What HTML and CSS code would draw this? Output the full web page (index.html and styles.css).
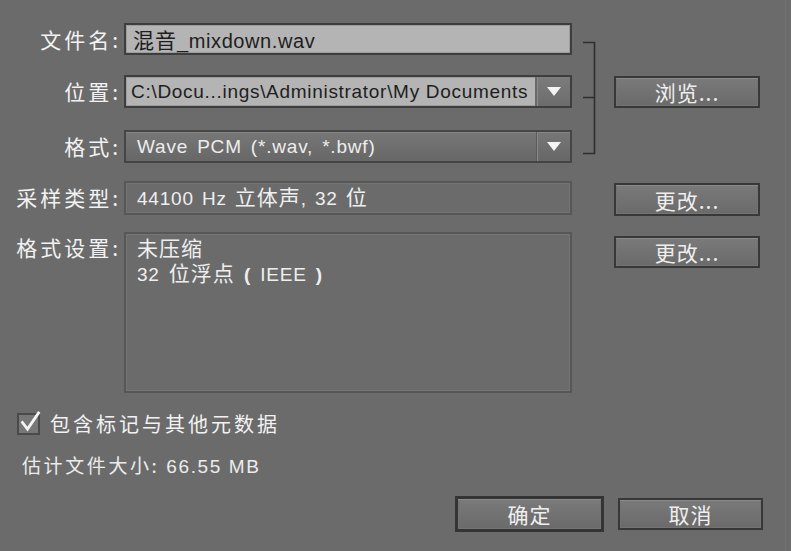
FILE: index.html
```html
<!DOCTYPE html>
<html lang="zh-CN">
<head>
<meta charset="utf-8">
<title>导出</title>
<link rel="stylesheet" href="styles.css">
</head>
<body>
<div class="dialog">
  <div class="form">
    <div class="label row1">文件名:</div>
    <div class="field input name row1"><span class="cj">混音</span>_mixdown.wav</div>
    <svg class="bracket" width="42" height="140" viewBox="0 0 42 140">
      <path d="M11 19.5 H22.5 V130.5 H11 M11 74.5 H22.5" fill="none" stroke="#2e2e2e" stroke-width="1.6"/>
    </svg>

    <div class="label row2">位置:</div>
    <div class="field input combo row2">
      <span class="value path">C:\Docu...ings\Administrator\My Documents</span>
      <span class="drop light"><span class="tri"></span></span>
    </div>
    <button class="btn browse row2">浏览...</button>

    <div class="label row3">格式:</div>
    <div class="field select combo row3">
      <span class="value wide">Wave PCM (*.wav, *.bwf)</span>
      <span class="drop"><span class="tri"></span></span>
    </div>

    <div class="label row4">采样类型:</div>
    <div class="field readout wide rate row4">44100 Hz <span class="cj">立体声</span>, 32 <span class="cj">位</span></div>
    <button class="btn row4">更改...</button>

    <div class="label row5 top">格式设置:</div>
    <div class="field readout box wide row5">
      <div class="line"><span class="cj">未压缩</span></div>
      <div class="line">32 <span class="cj">位浮点</span> <b class="paren">(</b> IEEE <b class="paren">)</b></div>
    </div>
    <button class="btn row5 top2">更改...</button>
  </div>

  <label class="check">
    <span class="cbox">
      <svg width="26" height="26" viewBox="0 0 26 26">
        <path d="M5.5 12.5 L10.5 19 L21.5 3" fill="none" stroke="#f4f4f4" stroke-width="2.8" stroke-linecap="square"/>
      </svg>
    </span>
    <span>包含标记与其他元数据</span>
  </label>

  <div class="estimate">估计文件大小: <span class="num">66.55 MB</span></div>

  <div class="actions">
    <button class="btn primary">确定</button>
    <button class="btn cancel">取消</button>
  </div>
</div>
</body>
</html>
```

FILE: styles.css
```css
html, body {
  margin: 0;
  padding: 0;
  background: #ffffff;
}

.dialog {
  width: 791px;
  height: 551px;
  box-sizing: border-box;
  background: #6b6b6b;
  box-shadow: inset -5px 0 0 #6b6b6b, inset -6px 0 0 #727272;
  padding-top: 23px;
  font-family: "Noto Sans CJK SC", "Liberation Sans", sans-serif;
  color: #f0f0f0;
}

.form {
  display: grid;
  grid-template-columns: 124px 448px 42px 146px;
  grid-template-rows: 32px 20px 33px 22px 33px 18px 34px 17px 161px;
}

.row1 { grid-row: 1; }
.row2 { grid-row: 3; }
.row3 { grid-row: 5; }
.row4 { grid-row: 7; }
.row5 { grid-row: 9; }

.label {
  grid-column: 1;
  font-size: 21px;
  letter-spacing: 3px;
  line-height: 32px;
  text-align: right;
  padding-right: 3px;
  color: #f2f2f2;
  white-space: nowrap;
}

.label.top {
  line-height: 30px;
  align-self: start;
}

.field {
  grid-column: 2;
  box-sizing: border-box;
  font-family: "Liberation Sans", "Noto Sans CJK SC", sans-serif;
  font-size: 19px;
  white-space: nowrap;
}

.cj {
  display: inline-block;
  font-family: "Noto Sans CJK SC", sans-serif;
  font-size: 21px;
  letter-spacing: 1px;
}

.input {
  background: #b4b4b4;
  color: #1e1e1e;
  border: 2px solid #3e3e3e;
  box-shadow: inset 0 0 0 1px #9c9c9c;
  padding: 0 7px;
  line-height: 28px;
}

.input.name {
  font-size: 20px;
  letter-spacing: 0.6px;
}

.combo {
  display: flex;
  align-items: stretch;
  padding: 0;
}

.combo .value {
  flex: 1;
  padding-left: 5px;
  line-height: 29px;
}

.value.path {
  letter-spacing: 0.7px;
}

.wide {
  letter-spacing: 0.8px;
  word-spacing: 3px;
}

.rate {
  word-spacing: 2px;
}

.drop {
  width: 33px;
  display: flex;
  align-items: center;
  justify-content: center;
  border-left: 1px solid #5b5b5b;
  box-shadow: inset 1px 0 0 #8a8a8a;
}

.drop.light {
  background: linear-gradient(#7c7c7c, #6c6c6c);
  border-left: 2px solid #6a6a6a;
}

.tri {
  width: 0;
  height: 0;
  border-left: 7px solid transparent;
  border-right: 7px solid transparent;
  border-top: 9px solid #f4f4f4;
}

.select {
  background: linear-gradient(#777777, #676767);
  color: #ededed;
  border: 2px solid #454545;
  box-shadow: inset 0 1px 0 #858585;
}

.select .value {
  padding-left: 11px;
}

.readout {
  color: #efefef;
  border: 2px solid #575757;
  box-shadow: inset 0 0 0 1px #747474;
  padding: 0 11px;
  line-height: 27px;
}

.box {
  padding-top: 1px;
}

.box .line {
  height: 25px;
  line-height: 25px;
}

.paren {
  font-weight: bold;
}

.bracket {
  grid-column: 3;
  grid-row: 1 / 6;
}

.btn {
  grid-column: 4;
  box-sizing: border-box;
  height: 32px;
  border: 2px solid #383838;
  background: linear-gradient(#7a7a7a, #6a6a6a);
  box-shadow: inset 0 1px 0 #8a8a8a, inset 0 0 0 1px #737373;
  color: #efefef;
  font-family: "Noto Sans CJK SC", "Liberation Sans", sans-serif;
  font-size: 21px;
  letter-spacing: 1px;
  line-height: 26px;
  padding: 0;
  margin: 0;
}

.btn.row2 { align-self: end; height: 32px; }
.btn.row4 { align-self: start; height: 33px; margin-top: 2px; }
.btn.top2 { align-self: start; margin-top: 4px; }

.check {
  display: flex;
  align-items: center;
  gap: 10px;
  margin: 19px 0 0 17px;
  font-size: 20px;
  letter-spacing: 3px;
  line-height: 24px;
  color: #f2f2f2;
}

.cbox {
  position: relative;
  width: 23px;
  height: 22px;
  box-sizing: border-box;
  border: 2px solid #4a4a4a;
  background: #777777;
}

.cbox svg {
  position: absolute;
  left: -2px;
  top: -5px;
}

.estimate {
  margin: 17px 0 0 22px;
  font-size: 19px;
  letter-spacing: 2.6px;
  line-height: 24px;
  color: #ececec;
}

.estimate .num {
  font-family: "Liberation Sans", sans-serif;
  letter-spacing: 1.6px;
}

.actions {
  display: flex;
  justify-content: flex-end;
  align-items: center;
  gap: 14px;
  margin: 17px 28px 0 0;
}

.actions .btn {
  font-size: 21px;
  letter-spacing: 1px;
}

.btn.primary {
  width: 149px;
  height: 36px;
  border: 3px solid #343434;
}

.btn.cancel {
  width: 145px;
  height: 32px;
}
```
